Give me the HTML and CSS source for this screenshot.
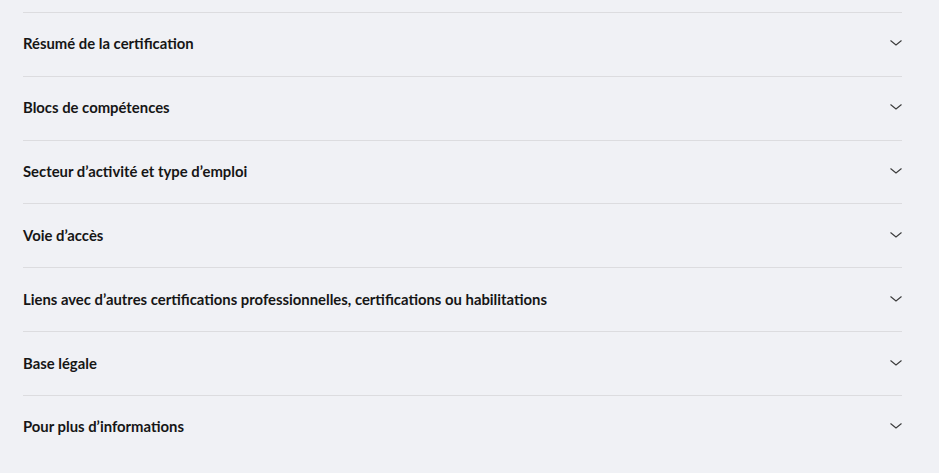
FILE: index.html
```html
<!DOCTYPE html>
<html lang="fr">
  <head>
    <meta charset="utf-8" />
    <title>Fiche certification</title>
    <link rel="stylesheet" href="styles.css">
  </head>
  <body>
    <section class="accordions">
      <div class="accordion"><button class="accordion-btn">Résumé de la certification<svg class="chevron" viewBox="0 0 12 6"><path d="M0.5 0.5 L6 5 L11.5 0.5" /></svg></button></div>
      <div class="accordion"><button class="accordion-btn">Blocs de compétences<svg class="chevron" viewBox="0 0 12 6"><path d="M0.5 0.5 L6 5 L11.5 0.5" /></svg></button></div>
      <div class="accordion"><button class="accordion-btn">Secteur d’activité et type d’emploi<svg class="chevron" viewBox="0 0 12 6"><path d="M0.5 0.5 L6 5 L11.5 0.5" /></svg></button></div>
      <div class="accordion"><button class="accordion-btn">Voie d’accès<svg class="chevron" viewBox="0 0 12 6"><path d="M0.5 0.5 L6 5 L11.5 0.5" /></svg></button></div>
      <div class="accordion"><button class="accordion-btn">Liens avec d’autres certifications professionnelles, certifications ou habilitations<svg class="chevron" viewBox="0 0 12 6"><path d="M0.5 0.5 L6 5 L11.5 0.5" /></svg></button></div>
      <div class="accordion"><button class="accordion-btn">Base légale<svg class="chevron" viewBox="0 0 12 6"><path d="M0.5 0.5 L6 5 L11.5 0.5" /></svg></button></div>
      <div class="accordion"><button class="accordion-btn">Pour plus d’informations<svg class="chevron" viewBox="0 0 12 6"><path d="M0.5 0.5 L6 5 L11.5 0.5" /></svg></button></div>
    </section>
  </body>
</html>
```

FILE: styles.css
```css
body {
  margin: 0;
  background-color: #f0f1f5;
  font-family: "Lato", "Noto Sans", sans-serif;
  color: #161616;
}
.accordions {
  margin: 12px 37px 0 23px;
}
.accordion {
  border-top: 1px solid #dcdcdf;
}
.accordion-btn {
  display: flex;
  align-items: center;
  justify-content: space-between;
  width: 100%;
  height: 62.83px;
  padding: 0 0 2px 0;
  border: none;
  background: none;
  font-family: inherit;
  font-size: 14.85px;
  font-weight: 700;
  color: inherit;
  text-align: left;
  cursor: pointer;
}
.chevron {
  width: 12px;
  height: 6px;
  fill: none;
  stroke: #3a3a3a;
  stroke-width: 1.1;
}
```
